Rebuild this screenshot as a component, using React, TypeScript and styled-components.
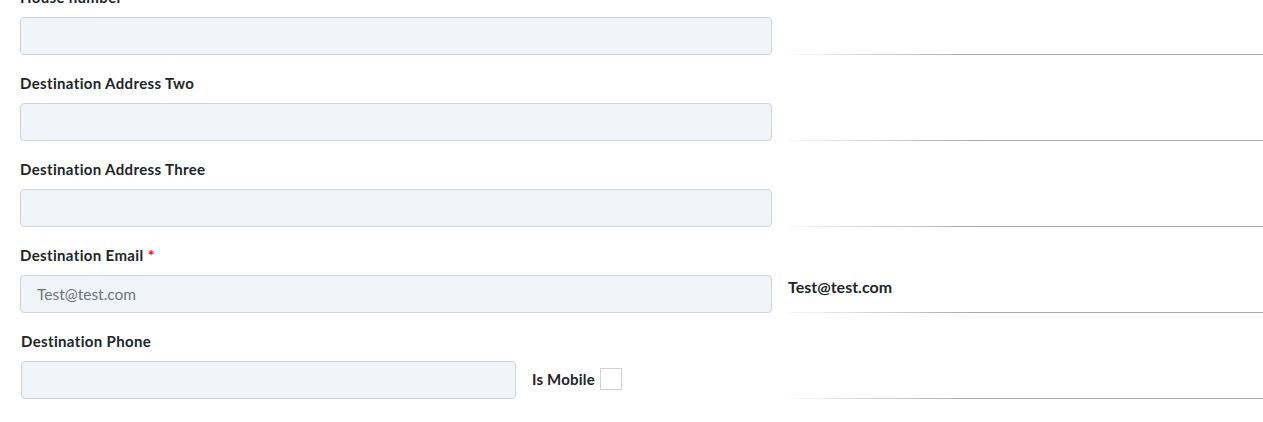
import React from 'react';
import styled, {createGlobalStyle} from "styled-components";

const GlobalStyle = createGlobalStyle`
    html, body {
        margin: 0;
        padding: 0;
        background: #ffffff;
        overflow: hidden;
    }
    body {
        font-family: Lato, "Noto Sans", sans-serif;
        color: #212529;
    }
`

type FieldProps = {
    label: string;
    required?: boolean;
    placeholder?: string;
    result?: string;
    mobile?: boolean;
};

const Field = ({label, required, placeholder, result, mobile}: FieldProps) => {
    return (
        <Row>
            <LeftColumn>
                <Label $shift={mobile}>
                    {label}
                    {required && <Required> *</Required>}
                </Label>
                <Controls>
                    <Input placeholder={placeholder} $narrow={mobile} readOnly/>
                    {mobile && (
                        <CheckLabel>
                            Is Mobile
                            <CheckBox type="checkbox"/>
                        </CheckLabel>
                    )}
                </Controls>
            </LeftColumn>
            <RightColumn>
                <Result>{result}</Result>
                <Divider/>
            </RightColumn>
        </Row>
    );
};

export default function App() {
    return (
        <>
            <GlobalStyle/>
            <Form>
                <Field label="House number"/>
                <Field label="Destination Address Two"/>
                <Field label="Destination Address Three"/>
                <Field label="Destination Email" required placeholder="Test@test.com" result="Test@test.com"/>
                <Field label="Destination Phone" mobile/>
            </Form>
        </>
    );
}

const Form = styled.form`
    margin-top: -13px;
    padding: 0 0 0 20px;
    display: flex;
    flex-direction: column;
`
const Row = styled.div`
    display: grid;
    grid-template-columns: 752px 1fr;
    column-gap: 16px;
    height: 86px;
`
const LeftColumn = styled.div`
    display: flex;
    flex-direction: column;
`
const Label = styled.label<{ $shift?: boolean }>`
    font-weight: 700;
    font-size: 15px;
    line-height: 20px;
    height: 20px;
    margin-bottom: 10px;
    padding-left: ${p => p.$shift ? '1px' : '0'};
    letter-spacing: 0.35px;
`
const Required = styled.span`
    color: #ff0000;
    font-size: 16px;
`
const Controls = styled.div`
    display: flex;
    align-items: center;
`
const Input = styled.input<{ $narrow?: boolean }>`
    box-sizing: border-box;
    width: ${p => p.$narrow ? '495px' : '752px'};
    margin-left: ${p => p.$narrow ? '1px' : '0'};
    height: 38px;
    padding: 0 16px;
    border: 1px solid #ced4da;
    border-radius: 4px;
    background: #f0f3f7;
    font-family: Lato, "Noto Sans", sans-serif;
    font-size: 15.5px;
    color: #495057;
    outline: none;

    &::placeholder {
        color: #6c757d;
    }
`
const CheckLabel = styled.label`
    display: flex;
    align-items: center;
    gap: 5px;
    margin-left: 16px;
    margin-top: -2px;
    font-weight: 700;
    font-size: 15px;
    letter-spacing: 0.2px;
`
const CheckBox = styled.input`
    appearance: none;
    margin: 0;
    width: 22px;
    height: 22px;
    border: 1px solid #d2d2d2;
    background: #fff;
`
const RightColumn = styled.div`
    display: flex;
    flex-direction: column;
    justify-content: flex-end;
    padding-bottom: 18px;
`
const Result = styled.span`
    font-weight: 700;
    font-size: 16px;
    line-height: 20px;
    margin-bottom: 15px;
`
const Divider = styled.div`
    height: 1px;
    background: linear-gradient(to right, rgba(170, 170, 170, 0.08), #aaaaaa 40%);
`
